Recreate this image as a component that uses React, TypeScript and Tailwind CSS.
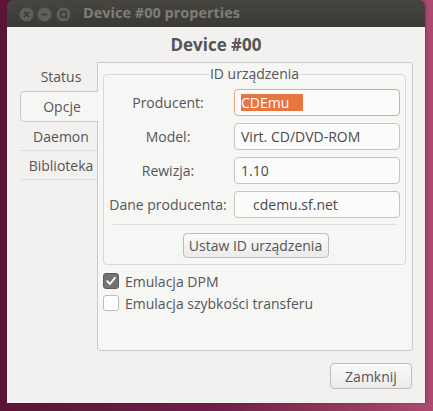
import React from "react";

const font = { fontFamily: '"Open Sans", "DejaVu Sans", sans-serif' };

function TitleButtons() {
  return (
    <div className="flex items-center gap-[3px] ml-[12px] mt-[2px]">
      <svg width="15" height="15" viewBox="0 0 15 15">
        <circle cx="7.5" cy="7.5" r="7" fill="#5f5e5a" />
        <path d="M5 5 L10 10 M10 5 L5 10" stroke="#3a3935" strokeWidth="1.6" />
      </svg>
      <svg width="15" height="15" viewBox="0 0 15 15">
        <circle cx="7.5" cy="7.5" r="7" fill="#5f5e5a" />
        <path d="M4.5 7.5 L10.5 7.5" stroke="#3a3935" strokeWidth="1.6" />
      </svg>
      <svg width="15" height="15" viewBox="0 0 15 15" className="ml-[1px]">
        <circle cx="7.5" cy="7.5" r="7" fill="#5f5e5a" />
        <rect x="4.8" y="4.8" width="5.4" height="5.4" fill="none" stroke="#3a3935" strokeWidth="1.4" />
      </svg>
    </div>
  );
}

function Entry({ children, focused = false, pl = "pl-[6px]" }: { children: React.ReactNode; focused?: boolean; pl?: string }) {
  return (
    <div
      className={`h-[27px] rounded-[4px] border flex items-center ${pl} text-[14px] text-[#4a4a4a] bg-[#fbfbfa] ${
        focused ? "border-[#eba382]" : "border-[#c4c3c1]"
      }`}
    >
      {children}
    </div>
  );
}

function Label({ children }: { children: React.ReactNode }) {
  return <div className="h-[27px] flex items-center justify-center text-[14px] text-[#555]">{children}</div>;
}

export default function App() {
  return (
    <div className="w-[433px] h-[411px] overflow-hidden bg-linear-to-r from-[#5a1536] via-[#6e2046] to-[#ad4a70]" style={font}>
      <div className="ml-[7px] w-[418px] h-[403px] flex flex-col rounded-t-[6px] overflow-hidden shadow-[1px_0_2px_rgba(0,0,0,0.25)]">
        {/* Titlebar */}
        <div className="h-[27px] flex items-center bg-linear-to-b from-[#46453f] to-[#3a3935]">
          <TitleButtons />
          <div className="ml-[12px] text-[14.5px] font-bold text-[#7f7d77] leading-none -mt-[1px]">Device #00 properties</div>
        </div>
        {/* Body */}
        <div className="flex-1 bg-[#f2f1f0] flex flex-col">
          <div className="h-[35px] flex items-center justify-center text-[17px] font-bold text-[#555]">Device #00</div>
          <div className="flex ml-[13px] mr-[12px] h-[289px]">
            {/* Tabs */}
            <div className="w-[77px] flex flex-col text-[14px] text-[#555]">
              <div className="h-[29px] flex items-center justify-center pl-[5px]">Status</div>
              <div className="h-[31px] flex items-center justify-center pl-[5px] border border-r-0 border-[#c8c7c5] rounded-l-[5px] bg-[#f6f6f5] -mr-px relative z-10">
                Opcje
              </div>
              <div className="h-[29px] flex items-center justify-center pl-[5px] border-b border-[#e0dfdd]">Daemon</div>
              <div className="h-[29px] flex items-center justify-center pl-[5px] border-b border-[#e0dfdd]">Biblioteka</div>
            </div>
            {/* Page */}
            <div className="flex-1 border border-[#cbcac8] rounded-r-[3px] rounded-bl-[3px] bg-[#f6f6f5] pl-[5px] pr-[6px] pt-px">
              <fieldset className="border border-[#d9d8d6] rounded-[4px] px-[5px] pb-[6px]">
                <legend className="mx-auto px-[1px] text-[14px] leading-[20px] text-[#555]">ID urządzenia</legend>
                <div className="grid grid-cols-[118px_166px] gap-x-[7px] gap-y-[7px] mt-[5px]">
                  <Label>Producent:</Label>
                  <Entry focused>
                    <span className="bg-[#e8743f] text-white leading-[17px] pr-[14px]">CDEmu</span>
                  </Entry>
                  <Label>Model:</Label>
                  <Entry>Virt. CD/DVD-ROM</Entry>
                  <Label>Rewizja:</Label>
                  <Entry>1.10</Entry>
                  <Label>Dane producenta:</Label>
                  <Entry pl="pl-[18px]">cdemu.sf.net</Entry>
                </div>
                <div className="mt-[6px] ml-[4px] mr-[3px] border-t border-[#dedddb]" />
                <div className="flex justify-center mt-[8px] pl-[2px]">
                  <button className="h-[25px] w-[146px] rounded-[4px] border border-[#bdbcba] bg-linear-to-b from-[#fafafa] to-[#ebebea] text-[14px] text-[#555] flex items-center justify-center">
                    Ustaw ID urządzenia
                  </button>
                </div>
              </fieldset>
              <div className="mt-[5px] flex flex-col">
                <div className="h-[22px] flex items-center gap-[6px] text-[14px] text-[#555]">
                  <div className="w-[16px] h-[16px] rounded-[3px] bg-[#737270] border border-[#5d5c5a] flex items-center justify-center">
                    <svg width="12" height="12" viewBox="0 0 12 12">
                      <path d="M2.2 6.2 L4.9 9 L9.9 2.8" fill="none" stroke="white" strokeWidth="1.9" strokeLinecap="round" strokeLinejoin="round" />
                    </svg>
                  </div>
                  <span>Emulacja DPM</span>
                </div>
                <div className="h-[22px] flex items-center gap-[6px] text-[14px] text-[#555]">
                  <div className="w-[16px] h-[16px] rounded-[3px] bg-white border border-[#bdbcba]" />
                  <span>Emulacja szybkości transferu</span>
                </div>
              </div>
            </div>
          </div>
          <div className="flex justify-end mt-[12px] pr-[13px]">
            <button className="h-[26px] w-[82px] rounded-[4px] border border-[#bdbcba] bg-linear-to-b from-[#fafafa] to-[#ebebea] text-[14px] text-[#555] flex items-center justify-center">
              Zamknij
            </button>
          </div>
        </div>
      </div>
    </div>
  );
}
